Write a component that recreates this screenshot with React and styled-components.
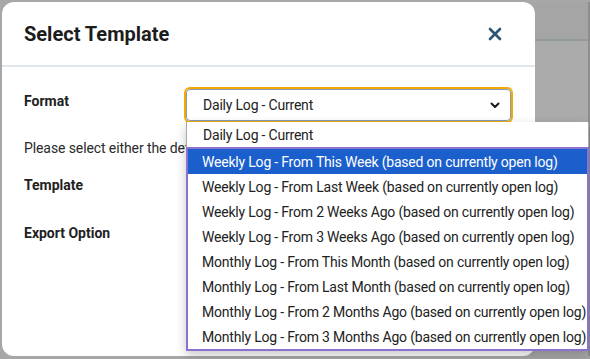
import styled, { createGlobalStyle } from 'styled-components';

const GlobalStyle = createGlobalStyle`
  html, body {
    margin: 0;
    padding: 0;
    background: #a7a7a7;
    font-family: Roboto, "Liberation Sans", sans-serif;
  }
`

const Screen = styled.div`
  width: 590px;
  height: 359px;
  box-sizing: border-box;
  padding: 2px 0 3px 2px;
  display: flex;
  background: #a7a7a7;
  overflow: hidden;
`
const Modal = styled.div`
  width: 533px;
  background: #fff;
  border-radius: 12px;
  display: flex;
  flex-direction: column;
  position: relative;
  z-index: 1;
`
const PageBehind = styled.div`
  flex: 1;
  display: flex;
  flex-direction: column;
  border-right: 2px solid #8e8e8e;
`
const PageHeader = styled.div`
  height: 37px;
  background: #a5a5a5;
  border-bottom: 2px solid #909a9a;
`
const PageRest = styled.div`
  flex: 1;
  background: #ababab;
`
const Header = styled.div`
  height: 63px;
  display: flex;
  align-items: center;
  justify-content: space-between;
  padding: 0 33px 0 22px;
  border-bottom: 2px solid #e1e6ea;
`
const Title = styled.h1`
  margin: 0;
  font-size: 20px;
  font-weight: 700;
  color: #1c1c1c;
`
const CloseButton = styled.button`
  border: none;
  background: none;
  padding: 0;
  display: flex;
  cursor: pointer;
`
const Body = styled.div`
  padding: 19px 22px 0 22px;
  display: flex;
  flex-direction: column;
`
const Row = styled.div`
  display: flex;
  align-items: center;
  min-height: ${p => p.$height || 30}px;
  margin-bottom: ${p => p.$gap || 0}px;
`
const Label = styled.label`
  width: 162px;
  font-size: 14px;
  font-weight: 700;
  color: #222;
  margin-top: ${p => p.$shift || 0}px;
`
const Hint = styled.p`
  margin: 0;
  font-size: 14px;
  letter-spacing: -0.1px;
  color: #2a2a2a;
  white-space: nowrap;
`
const SelectWrap = styled.div`
  position: relative;
`
const SelectBox = styled.div`
  width: 325px;
  height: 32px;
  box-sizing: border-box;
  border: 1px solid #7f9ebd;
  border-radius: 4px;
  box-shadow: 0 0 0 2px #f6a800;
  display: flex;
  align-items: center;
  justify-content: space-between;
  padding: 0 10px 0 16px;
  font-size: 14px;
  letter-spacing: -0.2px;
  color: #222;
`
const List = styled.div`
  position: absolute;
  top: 33px;
  left: 0;
  width: 403px;
  background: #fff;
  border: 1px solid #a9a9a9;
  border-top: none;
  box-sizing: border-box;
  box-shadow: 0 4px 10px rgba(0, 0, 0, 0.22);
`
const FocusGroup = styled.div`
  border: 2px solid #8b72d0;
  margin: 0 -1px -1px -1px;
`
const Option = styled.div`
  height: 25px;
  display: flex;
  align-items: center;
  padding-left: ${p => p.$inset}px;
  font-size: 14px;
  letter-spacing: -0.2px;
  white-space: nowrap;
  color: ${p => (p.$active ? '#fff' : '#222')};
  background: ${p => (p.$active ? '#1b5fcd' : 'transparent')};
`

const options = [
  'Weekly Log - From This Week (based on currently open log)',
  'Weekly Log - From Last Week (based on currently open log)',
  'Weekly Log - From 2 Weeks Ago (based on currently open log)',
  'Weekly Log - From 3 Weeks Ago (based on currently open log)',
  'Monthly Log - From This Month (based on currently open log)',
  'Monthly Log - From Last Month (based on currently open log)',
  'Monthly Log - From 2 Months Ago (based on currently open log)',
  'Monthly Log - From 3 Months Ago (based on currently open log)',
]

const App = () => {
  return (
    <>
      <GlobalStyle />
      <Screen>
        <Modal>
          <Header>
            <Title>Select Template</Title>
            <CloseButton aria-label="Close">
              <svg width="14" height="14" viewBox="0 0 14 14">
                <path d="M2 2 L12 12 M12 2 L2 12" stroke="#2c5572" strokeWidth="2.6" strokeLinecap="round" />
              </svg>
            </CloseButton>
          </Header>
          <Body>
            <Row $height={38} $gap={9}>
              <Label $shift={-8}>Format</Label>
              <SelectWrap>
                <SelectBox>
                  <span>Daily Log - Current</span>
                  <svg width="10" height="7" viewBox="0 0 10 7">
                    <path d="M1.5 1.5 L5 5 L8.5 1.5" fill="none" stroke="#1a1a1a" strokeWidth="2" strokeLinecap="round" strokeLinejoin="round" />
                  </svg>
                </SelectBox>
                <List>
                  <Option $inset={16}>Daily Log - Current</Option>
                  <FocusGroup>
                    {options.map((o, i) => (
                      <Option key={o} $inset={14} $active={i === 0}>{o}</Option>
                    ))}
                  </FocusGroup>
                </List>
              </SelectWrap>
            </Row>
            <Row $gap={7}>
              <Hint>Please select either the default template or a custom template.</Hint>
            </Row>
            <Row $gap={18}>
              <Label>Template</Label>
            </Row>
            <Row>
              <Label>Export Option</Label>
            </Row>
          </Body>
        </Modal>
        <PageBehind>
          <PageHeader />
          <PageRest />
        </PageBehind>
      </Screen>
    </>
  )
}

export default App
